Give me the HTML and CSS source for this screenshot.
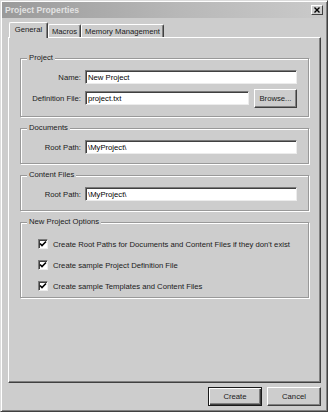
FILE: index.html
```html
<!DOCTYPE html>
<html lang="en">
<head>
  <meta charset="UTF-8" />
  <title>Project Properties</title>
  <link rel="stylesheet" href="styles.css">
</head>
<body>

  <div class="window">
    <div class="titlebar">
      <span class="title">Project Properties</span>
      <span class="close-btn">
        <svg width="6" height="6" viewBox="0 0 6 6"><path d="M0.5 0.5 L5.5 5.5 M5.5 0.5 L0.5 5.5" stroke="#000" stroke-width="1.4"/></svg>
      </span>
    </div>

    <div class="content">
      <div class="tabs">
        <div class="tab tab-general active">General</div>
        <div class="tab tab-macros">Macros</div>
        <div class="tab tab-memory">Memory Management</div>
      </div>

      <div class="panel">
        <div class="group group-project">
          <div class="group-title">Project</div>
          <div class="rows">
            <div class="row">
              <label class="field-label">Name:</label>
              <input class="field" type="text" value="New Project">
            </div>
            <div class="row">
              <label class="field-label">Definition File:</label>
              <input class="field" type="text" value="project.txt">
              <button class="btn btn-browse">Browse...</button>
            </div>
          </div>
        </div>

        <div class="group">
          <div class="group-title">Documents</div>
          <div class="rows">
            <div class="row">
              <label class="field-label">Root Path:</label>
              <input class="field" type="text" value="\MyProject\">
            </div>
          </div>
        </div>

        <div class="group">
          <div class="group-title">Content Files</div>
          <div class="rows">
            <div class="row">
              <label class="field-label">Root Path:</label>
              <input class="field" type="text" value="\MyProject\">
            </div>
          </div>
        </div>

        <div class="group group-options">
          <div class="group-title">New Project Options</div>
          <div class="rows options">
            <div class="row check-row">
              <span class="checkbox"><svg width="8" height="8" viewBox="0 0 8 8"><path d="M1 3.5 L3 5.5 L7 1.5" stroke="#000" stroke-width="1.6" fill="none"/></svg></span>
              <span>Create Root Paths for Documents and Content Files if they don't exist</span>
            </div>
            <div class="row check-row">
              <span class="checkbox"><svg width="8" height="8" viewBox="0 0 8 8"><path d="M1 3.5 L3 5.5 L7 1.5" stroke="#000" stroke-width="1.6" fill="none"/></svg></span>
              <span>Create sample Project Definition File</span>
            </div>
            <div class="row check-row">
              <span class="checkbox"><svg width="8" height="8" viewBox="0 0 8 8"><path d="M1 3.5 L3 5.5 L7 1.5" stroke="#000" stroke-width="1.6" fill="none"/></svg></span>
              <span>Create sample Templates and Content Files</span>
            </div>
          </div>
        </div>
      </div>

      <div class="footer">
        <button class="btn btn-footer btn-default">Create</button>
        <button class="btn btn-footer">Cancel</button>
      </div>
    </div>
  </div>

</body>
</html>
```
FILE: styles.css
```css
html, body {
  margin: 0;
  padding: 0;
  background: #cdcdcd;
}

body {
  font-family: "Liberation Sans", Arial, sans-serif;
  font-size: 7.7px;
  color: #1a1a1a;
}

* {
  box-sizing: border-box;
}

.window {
  width: 328px;
  height: 412px;
  border: 1px solid;
  border-color: #dcdcdc #404040 #404040 #dcdcdc;
  box-shadow: inset 1px 1px 0 #fff, inset -1px -1px 0 #808080;
  padding: 1px;
  display: flex;
  flex-direction: column;
  background: #cdcdcd;
}

/* title bar */
.titlebar {
  height: 16px;
  display: flex;
  align-items: center;
  justify-content: space-between;
  padding: 0 3px;
  background: linear-gradient(to right, #9a9a9a, #b8b8b8 55%, #cacaca);
  color: #e2e2e2;
}

.title {
  font-weight: bold;
  font-size: 8.6px;
}

.close-btn {
  width: 12px;
  height: 10px;
  display: flex;
  align-items: center;
  justify-content: center;
  background: #cdcdcd;
  border: 1px solid;
  border-color: #fff #404040 #404040 #fff;
}

/* body */
.content {
  flex: 1;
  display: flex;
  flex-direction: column;
  padding: 4px 5px 0 6px;
}

.tabs {
  height: 15px;
  display: flex;
  align-items: flex-end;
  padding-left: 1px;
}

.tab {
  height: 13px;
  display: flex;
  align-items: center;
  justify-content: center;
  border: 1px solid;
  border-bottom: none;
  border-color: #fff #404040 #404040 #fff;
  box-shadow: inset -1px 0 0 #808080;
  border-radius: 2px 2px 0 0;
  background: #cdcdcd;
}

.tab.active {
  height: 16px;
  margin-bottom: -1px;
  position: relative;
  z-index: 1;
  padding-bottom: 2px;
}

.tab-general { width: 39px; }
.tab-macros { width: 33px; }
.tab-memory { width: 83px; }

.panel {
  flex: 1;
  display: flex;
  flex-direction: column;
  gap: 11px;
  border: 1px solid;
  border-color: #fff #404040 #404040 #fff;
  box-shadow: inset -1px -1px 0 #808080;
  padding: 20px 11px 0 11px;
}

/* group boxes */
.group {
  border: 1px solid #999;
  box-shadow: 1px 1px 0 #fff, inset 1px 1px 0 #fff;
  padding: 0 11px 6px 0;
}

.group-project {
  padding-bottom: 8px;
}

.group-options {
  padding-bottom: 1px;
}

.group-title {
  display: table;
  margin: -6px 0 0 6px;
  padding: 0 2px;
  line-height: 10px;
  background: #cdcdcd;
}

.rows {
  display: flex;
  flex-direction: column;
  gap: 1px;
  margin-top: 4px;
}

.row {
  height: 20px;
  display: flex;
  align-items: center;
}

.field-label {
  width: 60px;
  margin-right: 4px;
  text-align: right;
  white-space: nowrap;
}

.field {
  flex: 1;
  min-width: 0;
  height: 14px;
  padding: 0 2px;
  font: inherit;
  color: #000;
  background: #fff;
  border: 1px solid;
  border-color: #7a7a7a #ececec #ececec #7a7a7a;
  box-shadow: inset 1px 1px 0 #404040;
  outline: none;
}

.btn {
  font: inherit;
  color: #1a1a1a;
  background: #cdcdcd;
  border: 1px solid;
  border-color: #fff #404040 #404040 #fff;
  box-shadow: inset -1px -1px 0 #808080;
  padding: 0;
  cursor: pointer;
}

.btn-browse {
  width: 43px;
  height: 19px;
  margin-left: 5px;
}

/* options */
.options {
  margin-top: 7px;
  padding-left: 17px;
}

.check-row {
  gap: 5px;
}

.checkbox {
  width: 10px;
  height: 10px;
  display: flex;
  align-items: center;
  justify-content: center;
  background: #fff;
  border: 1px solid;
  border-color: #7a7a7a #ececec #ececec #7a7a7a;
  box-shadow: inset 1px 1px 0 #404040;
}

/* footer buttons */
.footer {
  display: flex;
  justify-content: flex-end;
  gap: 5px;
  padding: 4px 0;
}

.btn-footer {
  width: 54px;
  height: 19px;
}

.btn-default {
  border-color: #1a1a1a;
  box-shadow: inset 1px 1px 0 #fff, inset -1px -1px 0 #404040, inset -2px -2px 0 #808080;
}
```
